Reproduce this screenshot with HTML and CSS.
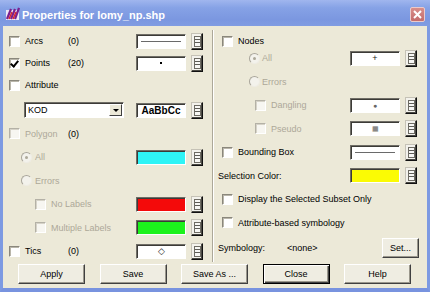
FILE: index.html
```html
<!DOCTYPE html>
<html lang="en">
<head>
    <meta charset="UTF-8">
    <title>Properties for lomy_np.shp</title>
    <link rel="stylesheet" href="styles.css">
</head>
<body>
<div class="window">
    <!-- Title bar -->
    <div class="titlebar">
        <svg class="app-icon" width="15" height="14" viewBox="0 0 15 14">
            <rect x="1" y="3" width="13" height="10" fill="#ece8f6"/>
            <path d="M2 12 L6 2 M6 12 L10 2 M10 12 L14 1" stroke="#7a1f8f" stroke-width="2.2" fill="none"/>
            <path d="M4 12 L7 5 M8 12 L11 5" stroke="#d8262a" stroke-width="1.4" fill="none"/>
        </svg>
        <span class="title">Properties for lomy_np.shp</span>
        <span class="close">
            <svg width="9" height="9" viewBox="0 0 9 9"><path d="M1 1L8 8M8 1L1 8" stroke="#fff" stroke-width="2"/></svg>
        </span>
    </div>

    <div class="body">
        <div class="columns">
            <!-- Left column -->
            <div class="col col-left">
                <div class="row">
                    <span class="cb"></span><span class="label">Arcs</span><span class="count">(0)</span>
                    <span class="sym"><span class="swatch"><i class="hline"></i></span><span class="pick"></span></span>
                </div>
                <div class="row close-up">
                    <span class="cb checked"></span><span class="label">Points</span><span class="count">(20)</span>
                    <span class="sym"><span class="swatch"><i class="dot"></i></span><span class="pick"></span></span>
                </div>
                <div class="row close-up">
                    <span class="cb"></span><span class="label">Attribute</span>
                </div>
                <div class="row spaced">
                    <span class="select"><span class="select-text">KOD</span><span class="select-btn"></span></span>
                    <span class="sym"><span class="swatch font-sample">AaBbCc</span><span class="pick"></span></span>
                </div>
                <div class="row">
                    <span class="cb disabled"></span><span class="label muted">Polygon</span><span class="count">(0)</span>
                </div>
                <div class="row indent-1">
                    <span class="radio selected"></span><span class="label muted">All</span>
                    <span class="sym"><span class="swatch" style="background:#2ef4f6"></span><span class="pick"></span></span>
                </div>
                <div class="row indent-1">
                    <span class="radio"></span><span class="label muted">Errors</span>
                </div>
                <div class="row indent-2">
                    <span class="cb disabled"></span><span class="label muted">No Labels</span>
                    <span class="sym"><span class="swatch" style="background:#f40a0a"></span><span class="pick"></span></span>
                </div>
                <div class="row indent-2">
                    <span class="cb disabled"></span><span class="label muted">Multiple Labels</span>
                    <span class="sym"><span class="swatch" style="background:#1cf21c"></span><span class="pick"></span></span>
                </div>
                <div class="row">
                    <span class="cb"></span><span class="label">Tics</span><span class="count">(0)</span>
                    <span class="sym"><span class="swatch"><i class="mark">&#9671;</i></span><span class="pick"></span></span>
                </div>
            </div>

            <!-- Right column -->
            <div class="col col-right">
                <div class="row">
                    <span class="cb"></span><span class="label">Nodes</span>
                </div>
                <div class="row indent-r1 flush">
                    <span class="radio selected"></span><span class="label muted">All</span>
                    <span class="sym"><span class="swatch"><i class="mark">+</i></span><span class="pick"></span></span>
                </div>
                <div class="row indent-r1">
                    <span class="radio"></span><span class="label muted">Errors</span>
                </div>
                <div class="row indent-r2">
                    <span class="cb disabled"></span><span class="label muted">Dangling</span>
                    <span class="sym"><span class="swatch"><i class="mark small">&#9679;</i></span><span class="pick"></span></span>
                </div>
                <div class="row indent-r2">
                    <span class="cb disabled"></span><span class="label muted">Pseudo</span>
                    <span class="sym"><span class="swatch"><i class="mark small">&#9638;</i></span><span class="pick"></span></span>
                </div>
                <div class="row">
                    <span class="cb"></span><span class="label">Bounding Box</span>
                    <span class="sym"><span class="swatch"><i class="hline"></i></span><span class="pick"></span></span>
                </div>
                <div class="row outdent">
                    <span class="label">Selection Color:</span>
                    <span class="sym"><span class="swatch" style="background:#fbfb04"></span><span class="pick"></span></span>
                </div>
                <div class="row">
                    <span class="cb"></span><span class="label">Display the Selected Subset Only</span>
                </div>
                <div class="row">
                    <span class="cb"></span><span class="label">Attribute-based symbology</span>
                </div>
                <div class="row tall outdent">
                    <span class="label sym-label">Symbology:</span><span class="label">&lt;none&gt;</span>
                    <button class="btn set-btn">Set...</button>
                </div>
            </div>
        </div>

        <!-- Bottom buttons -->
        <div class="buttons">
            <button class="btn">Apply</button>
            <button class="btn">Save</button>
            <button class="btn">Save As ...</button>
            <button class="btn default">Close</button>
            <button class="btn">Help</button>
        </div>
    </div>
</div>
</body>
</html>
```

FILE: styles.css
```css
/* Dialog window */
body {
    margin: 0;
    font-family: "Liberation Sans", Arial, sans-serif;
    font-size: 9px;
    color: #000;
}

.window {
    width: 430px;
    height: 292px;
    display: flex;
    flex-direction: column;
}

.titlebar {
    height: 26px;
    display: flex;
    align-items: center;
    padding: 2px 5px 0;
    box-sizing: border-box;
    background: linear-gradient(#a0b6ee, #86a2e6 30%, #7b97e0 75%, #809ce2);
    color: #fff;
}

.app-icon {
    margin-right: 2px;
}

.title {
    font-size: 11px;
    font-weight: bold;
    flex: 1;
    padding-top: 1px;
}

.close {
    width: 15px;
    height: 15px;
    box-sizing: border-box;
    border: 1px solid #ebcaca;
    border-radius: 2px;
    background: linear-gradient(#d88e8a, #c46c6c);
    display: flex;
    align-items: center;
    justify-content: center;
}

.body {
    flex: 1;
    background: #ece9d8;
    border-left: 3px solid #7d9ae2;
    border-right: 3px solid #7d9ae2;
    border-bottom: 4px solid #7893df;
    display: flex;
    flex-direction: column;
}

/* Columns */
.columns {
    display: flex;
    margin-top: 4px;
    height: 232px;
}

.col {
    display: flex;
    flex-direction: column;
    gap: 6.5px;
    padding-top: 2.5px;
    box-sizing: border-box;
}

.col-left {
    width: 210px;
    padding-left: 6px;
    padding-right: 9px;
    border-right: 1px solid #aca899;
}

.col-right {
    flex: 1;
    padding-left: 8px;
    padding-right: 10px;
    border-left: 1px solid #fff;
}

.row {
    display: flex;
    align-items: center;
    height: 17px;
    flex-shrink: 0;
}

.row.close-up { margin-top: -1.5px; }
.row.spaced { margin-top: 1.5px; }
.row.flush { margin-top: -6.5px; }
.row.tall { height: 20px; }
.row.outdent { margin-left: -4px; }

.indent-1 { padding-left: 12px; }
.indent-2 { padding-left: 26px; }
.indent-r1 { padding-left: 27px; }
.indent-r2 { padding-left: 33px; }

.label {
    white-space: nowrap;
}

.cb + .label { margin-left: 5px; }
.radio + .label { margin-left: 3px; }
.indent-r1 .radio + .label { margin-left: 2px; }

.col-left .cb + .label { width: 43px; }
.indent-2 .cb + .label { width: auto; }

.muted {
    color: #aca899;
}

.sym-label {
    width: 69px;
}

/* Check boxes and radios */
.cb {
    width: 11px;
    height: 11px;
    box-sizing: border-box;
    border: 1px solid;
    border-color: #8a877c #fff #fff #8a877c;
    box-shadow: inset 1px 1px #b9b6aa;
    background: #fff;
    position: relative;
    flex-shrink: 0;
}

.cb.disabled {
    border-color: #b4b1a6 #fff #fff #b4b1a6;
    box-shadow: inset 1px 1px #d6d3c8;
    background: #f7f6f1;
}

.cb.checked::after {
    content: "";
    position: absolute;
    left: 2px;
    top: 0px;
    width: 3px;
    height: 6px;
    border: solid #000;
    border-width: 0 2px 2px 0;
    transform: rotate(40deg);
}

.radio {
    width: 11px;
    height: 11px;
    box-sizing: border-box;
    border-radius: 50%;
    border: 1px solid;
    border-color: #a9a69b #eeece4 #eeece4 #a9a69b;
    background: #f3f2ec;
    position: relative;
    flex-shrink: 0;
}

.radio.selected::after {
    content: "";
    position: absolute;
    left: 3px;
    top: 3px;
    width: 3px;
    height: 3px;
    border-radius: 50%;
    background: #aca899;
}

.count {
    white-space: nowrap;
}

/* Symbol swatch + picker button */
.sym {
    margin-left: auto;
    display: flex;
    align-items: center;
    gap: 5px;
}

.swatch {
    width: 50px;
    height: 15px;
    box-sizing: border-box;
    border: 1px solid;
    border-color: #6f6d66 #fff #fff #6f6d66;
    box-shadow: inset 1px 1px #3c3b37;
    background: #fff;
    display: flex;
    align-items: center;
    justify-content: center;
}

.swatch .hline {
    width: 40px;
    height: 1px;
    background: #6a6a6a;
}

.swatch .dot {
    width: 2px;
    height: 2px;
    background: #000;
}

.swatch .mark {
    font-style: normal;
    font-size: 9px;
    line-height: 1;
    color: #222;
}

.swatch .mark.small {
    font-size: 7px;
    color: #666;
}

.font-sample {
    font-weight: bold;
    font-size: 10px;
}

.pick {
    width: 12px;
    height: 17px;
    box-sizing: border-box;
    background: #f3f2ec;
    border: 1px solid;
    border-color: #c5c2b6 #111 #111 #c5c2b6;
    box-shadow: inset -1px -1px #4a4943;
    position: relative;
}

.pick::before {
    content: "";
    position: absolute;
    left: 2px;
    top: 2px;
    width: 5px;
    height: 9px;
    border: 1px solid #6d6b63;
    background: linear-gradient(#f7f7f4 2px, #5d5c56 2px, #5d5c56 3px, #f7f7f4 3px, #f7f7f4 5px, #5d5c56 5px, #5d5c56 6px, #f7f7f4 6px);
}

/* Combo box */
.select {
    margin-left: 15px;
    width: 100px;
    height: 16px;
    box-sizing: border-box;
    border: 1px solid;
    border-color: #6f6d66 #fff #fff #6f6d66;
    box-shadow: inset 1px 1px #3c3b37;
    background: #fff;
    display: flex;
    align-items: center;
    padding: 0 1px 0 3px;
}

.select-text {
    flex: 1;
}

.select-btn {
    width: 13px;
    height: 12px;
    box-sizing: border-box;
    background: #ece9d8;
    border: 1px solid;
    border-color: #fff #404040 #404040 #fff;
    display: flex;
    align-items: center;
    justify-content: center;
}

.select-btn::after {
    content: "";
    border-left: 3px solid transparent;
    border-right: 3px solid transparent;
    border-top: 3px solid #000;
}

/* Buttons */
.btn {
    font-family: inherit;
    font-size: 9px;
    color: #000;
    background: #efede2;
    border: 1px solid;
    border-color: #fff #404040 #404040 #fff;
    box-shadow: inset -1px -1px #9a978c;
    padding: 0;
    height: 20px;
    box-sizing: border-box;
}

.btn.default {
    border: 1px solid #000;
    box-shadow: inset 1px 1px #fff, inset -1px -1px #404040, inset -2px -2px #9a978c;
}

.set-btn {
    width: 37px;
    margin-left: auto;
    margin-right: -2px;
}

.buttons {
    display: flex;
    justify-content: center;
    gap: 14.5px;
    margin-top: 2px;
    padding-right: 1px;
}

.buttons .btn {
    width: 67px;
}
```
